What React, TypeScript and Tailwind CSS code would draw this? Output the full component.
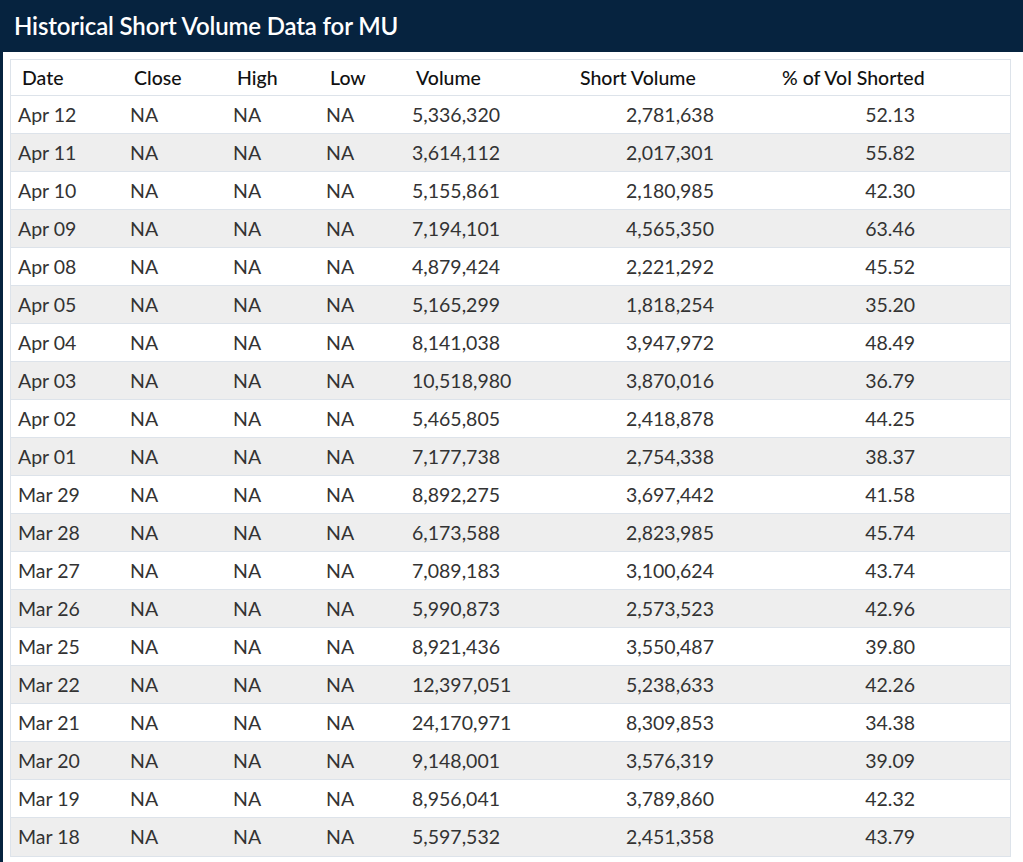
const rows: [string, string, string, string][] = [
  ["Apr 12", "5,336,320", "2,781,638", "52.13"],
  ["Apr 11", "3,614,112", "2,017,301", "55.82"],
  ["Apr 10", "5,155,861", "2,180,985", "42.30"],
  ["Apr 09", "7,194,101", "4,565,350", "63.46"],
  ["Apr 08", "4,879,424", "2,221,292", "45.52"],
  ["Apr 05", "5,165,299", "1,818,254", "35.20"],
  ["Apr 04", "8,141,038", "3,947,972", "48.49"],
  ["Apr 03", "10,518,980", "3,870,016", "36.79"],
  ["Apr 02", "5,465,805", "2,418,878", "44.25"],
  ["Apr 01", "7,177,738", "2,754,338", "38.37"],
  ["Mar 29", "8,892,275", "3,697,442", "41.58"],
  ["Mar 28", "6,173,588", "2,823,985", "45.74"],
  ["Mar 27", "7,089,183", "3,100,624", "43.74"],
  ["Mar 26", "5,990,873", "2,573,523", "42.96"],
  ["Mar 25", "8,921,436", "3,550,487", "39.80"],
  ["Mar 22", "12,397,051", "5,238,633", "42.26"],
  ["Mar 21", "24,170,971", "8,309,853", "34.38"],
  ["Mar 20", "9,148,001", "3,576,319", "39.09"],
  ["Mar 19", "8,956,041", "3,789,860", "42.32"],
  ["Mar 18", "5,597,532", "2,451,358", "43.79"],
];

// column widths: date, close, high, low, volume, short volume, % shorted
const cols = "grid grid-cols-[112px_103px_93px_86px_164px_202px_239px]";

export default function App() {
  return (
    <div
      className="w-[1023px] h-[862px] bg-white border-l-[3px] border-[#06233f] overflow-hidden"
      style={{ fontFamily: "Lato, 'Open Sans', sans-serif" }}
    >
      <div className="h-[52px] bg-[#06233f] flex items-center pl-[11px]">
        <h1 className="text-white text-[24px] font-semibold tracking-[-0.15px]">
          Historical Short Volume Data for MU
        </h1>
      </div>

      <div className="pl-[7px] pt-[7px]">
        <div className="w-[1001px] border border-[#dde3ea]">
          <div className={`${cols} h-[36px] items-center text-[19.5px] font-medium text-[#111] border-b border-[#dde3ea]`}>
            <div className="pl-[11px]">Date</div>
            <div className="pl-[11px]">Close</div>
            <div className="pl-[11px]">High</div>
            <div className="pl-[11px]">Low</div>
            <div className="pl-[11px]">Volume</div>
            <div className="pl-[11px]">Short Volume</div>
            <div className="pl-[11px]">% of Vol Shorted</div>
          </div>
          {rows.map(([date, vol, shortVol, pct], i) => (
            <div
              key={date}
              className={`${cols} h-[38px] items-center text-[19.5px] font-normal text-[#333] ${
                i < rows.length - 1 ? "border-b border-[#dde3ea]" : ""
              } ${i % 2 === 1 ? "bg-[#eeeeee]" : "bg-white"}`}
            >
              <div className="pl-[7px]">{date}</div>
              <div className="pl-[7px]">NA</div>
              <div className="pl-[7px]">NA</div>
              <div className="pl-[7px]">NA</div>
              <div className="pl-[7px]">{vol}</div>
              <div className="pr-[57px] text-right">{shortVol}</div>
              <div className="pr-[95px] text-right">{pct}</div>
            </div>
          ))}
        </div>
      </div>
    </div>
  );
}
